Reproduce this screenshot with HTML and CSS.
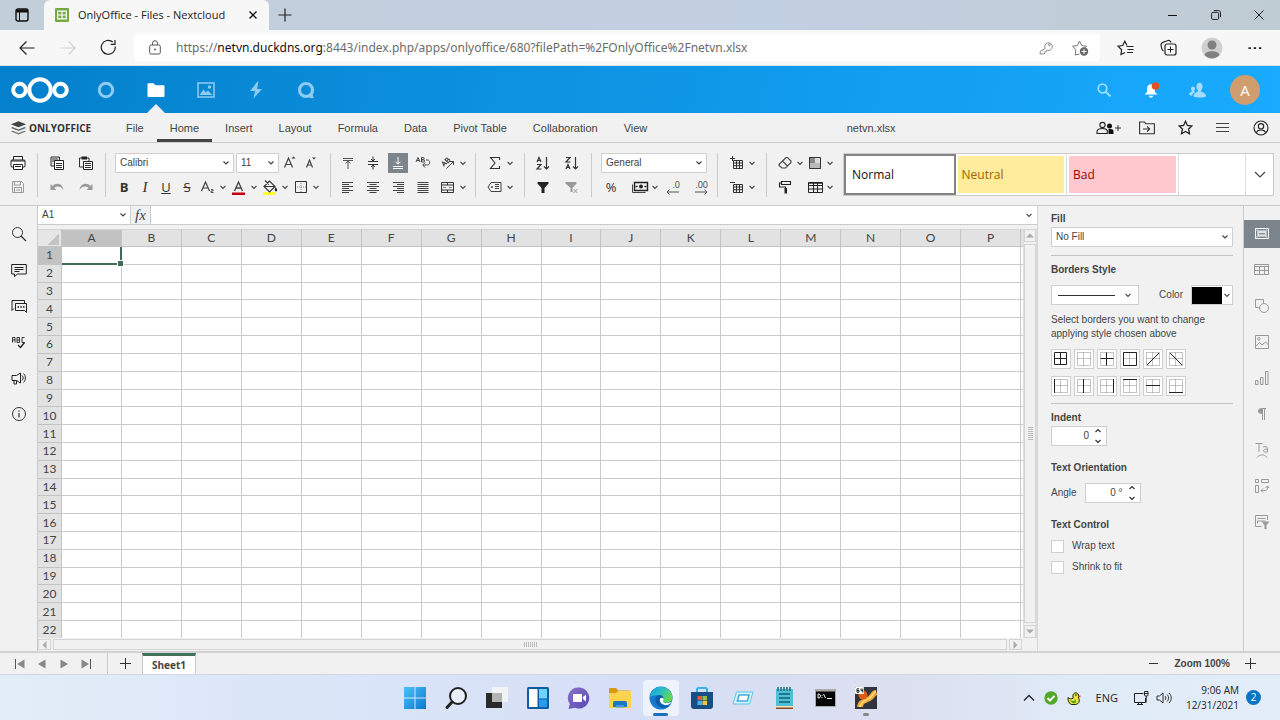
FILE: index.html
```html
<!DOCTYPE html>
<html lang="en">
<head>
<meta charset="utf-8">
<title>OnlyOffice - Files - Nextcloud</title>
<link rel="stylesheet" href="styles.css">
</head>
<body>
<svg class="sprite" aria-hidden="true">
  <symbol id="chev" viewBox="0 0 10 20"><path d="M2.500 8.800 5 11.300 7.500 8.800" fill="none" stroke="#444" stroke-width="1.200"/></symbol>
  <symbol id="dots" viewBox="0 0 14 14"><path d="M.5.5h13v13H.5zM6.500.5v13M.5 6.500h13" fill="none" stroke="#888" stroke-dasharray="1 1"/></symbol>
</svg>

<header class="browser">
  <div class="tabstrip">
    <button class="tabmenu" aria-label="Tab actions"><svg width="14" height="14" viewBox="0 0 14 14"><rect x="1" y="1" width="12" height="12" rx="2" fill="none" stroke="#111" stroke-width="1.400"/><path d="M1 3h12" stroke="#111" stroke-width="3"/><path d="M4.500 4v9" stroke="#111"/></svg></button>
    <div class="tab">
      <svg width="14" height="14" viewBox="0 0 14 14"><rect width="14" height="14" rx="1" fill="#74ab3c"/><path d="M2.700 3.200h8.600v7.600H2.700zM7 3.200v7.600M2.700 7h8.600" fill="none" stroke="#fff" stroke-width="1.200"/></svg>
      <span class="tab-title">OnlyOffice - Files - Nextcloud</span>
      <button aria-label="Close tab"><svg width="8" height="8" viewBox="0 0 8 8"><path d="M.5.5l7 7M7.500.5l-7 7" stroke="#111" stroke-width="1.300"/></svg></button>
    </div>
    <button class="newtab" aria-label="New tab"><svg width="14" height="14" viewBox="0 0 14 14"><path d="M7 .5v13M.5 7h13" stroke="#222" stroke-width="1.200"/></svg></button>
    <div class="wincontrols">
      <button aria-label="Minimize"><svg width="10" height="10" viewBox="0 0 10 10"><path d="M0 5.500h9" stroke="#111"/></svg></button>
      <button aria-label="Restore"><svg width="10" height="10" viewBox="0 0 10 10"><rect x=".6" y="2.400" width="7" height="7" rx="1.200" fill="none" stroke="#222"/><path d="M2.800.6h4.700a2 2 0 0 1 2 2v4.600" fill="none" stroke="#222"/></svg></button>
      <button aria-label="Close"><svg width="10" height="10" viewBox="0 0 10 10"><path d="M.5.5l9 9M9.500.5l-9 9" stroke="#222"/></svg></button>
    </div>
  </div>
  <div class="navbar">
    <div class="navbuttons">
      <button aria-label="Back"><svg width="16" height="16" viewBox="0 0 16 16"><path d="M15.500 8H1M7.500 1.500 1 8l6.500 6.500" fill="none" stroke="#222" stroke-width="1.200"/></svg></button>
      <button aria-label="Forward"><svg width="16" height="16" viewBox="0 0 16 16"><path d="M.5 8H15M8.500 1.500 15 8l-6.500 6.500" fill="none" stroke="#d2d2d2" stroke-width="1.200"/></svg></button>
      <button aria-label="Refresh"><svg width="17" height="17" viewBox="0 0 17 17"><path d="M15.200 7.500A7 7 0 1 1 12.800 3M15 1v4.300h-4.300" fill="none" stroke="#222" stroke-width="1.200"/></svg></button>
    </div>
    <div class="address">
      <svg width="12" height="15" viewBox="0 0 12 15"><rect x=".7" y="5" width="10.600" height="9" rx="1.500" fill="none" stroke="#555"/><path d="M3.500 5V3.200a2.500 2.500 0 0 1 5 0V5" fill="none" stroke="#555"/><circle cx="6" cy="9.500" r=".9" fill="#555"/></svg>
      <div class="url" role="textbox" aria-label="Address">https://<b>netvn.duckdns.org</b>:8443/index.php/apps/onlyoffice/680?filePath=%2FOnlyOffice%2Fnetvn.xlsx</div>
      <button aria-label="Passwords"><svg width="14" height="14" viewBox="0 0 14 14"><path d="M6.200 7.500a3.800 3.800 0 1 1 2 1.700L7.200 9.800v1H5.800v1.200l-1 1H1.200v-2.500z" fill="none" stroke="#888"/><circle cx="10.300" cy="3.800" r="1" fill="none" stroke="#888" stroke-width=".8"/></svg></button>
      <button aria-label="Add favorite"><svg width="17" height="16" viewBox="0 0 17 16"><path d="M7.500 14 3.200 15l.7-5.200L.6 6.300l4.800-.8L7.500 1l2.200 4.500 4.800.8-2 2" fill="none" stroke="#777"/><circle cx="12" cy="11.500" r="4.200" fill="#666"/><path d="M12 9v5M9.500 11.500h5" stroke="#fff"/></svg></button>
    </div>
    <div class="browser-actions">
      <button aria-label="Favorites"><svg width="17" height="16" viewBox="0 0 17 16"><path d="M8 12.500 4 14.500l.6-4.800L1 6.200l4.700-.7L7.800 1.200 10 5.500" fill="none" stroke="#222" stroke-width="1.200"/><path d="M9.500 6.500h7M10.500 9.500h6M10 12.500h6" stroke="#222"/></svg></button>
      <button aria-label="Collections"><svg width="17" height="17" viewBox="0 0 17 17"><path d="M3.500 12C1.500 11 1.500 9 1 5.500 1 4 2 3.500 8 1.500c2-.6 2.500.5 3 2" fill="none" stroke="#222" stroke-width="1.200"/><rect x="5" y="5" width="11" height="11" rx="2" fill="none" stroke="#222" stroke-width="1.200"/><path d="M10.500 7.500v6M7.500 10.500h6" stroke="#222"/></svg></button>
      <button aria-label="Profile"><svg width="22" height="22" viewBox="0 0 22 22"><circle cx="11" cy="11" r="10.500" fill="#d0d0d0"/><circle cx="11" cy="8" r="4.500" fill="#808080"/><path d="M3.500 18c1-5 14-5 15 0-4 4.500-11 4.500-15 0z" fill="#808080"/></svg></button>
      <button aria-label="Settings and more"><svg width="14" height="4" viewBox="0 0 14 4"><path d="M.5 1.200h2.400v1.900H.5zM5.700 1.200h2.400v1.900H5.700zM10.900 1.200h2.400v1.900h-2.400z" fill="#222"/></svg></button>
    </div>
  </div>
</header>

<header class="cloud">
  <a class="cloud-logo" href="#" aria-label="Nextcloud"><svg width="58" height="28" viewBox="0 0 58 28"><g fill="none" stroke="#fff"><circle cx="29" cy="14" r="10.700" stroke-width="4"/><circle cx="8.500" cy="14" r="6.300" stroke-width="4"/><circle cx="49.500" cy="14" r="6.300" stroke-width="4"/></g></svg></a>
  <nav class="cloud-apps">
    <a href="#" aria-label="Dashboard"><svg width="18" height="18" viewBox="0 0 18 18"><circle cx="9" cy="9" r="6.700" fill="none" stroke="#8ecbf1" stroke-width="3"/></svg></a>
    <a href="#" aria-label="Files" class="current"><svg width="18" height="18" viewBox="0 0 18 18"><path d="M.5 3.200a1 1 0 0 1 1-1h5l2 2h8a1 1 0 0 1 1 1V15a1 1 0 0 1-1 1h-15a1 1 0 0 1-1-1z" fill="#fff"/></svg></a>
    <a href="#" aria-label="Photos"><svg width="18" height="18" viewBox="0 0 18 18"><path d="M1 2h16v14H1z" fill="none" stroke="#8ecbf1" stroke-width="1.500"/><path d="m2.500 14 4-5.500 2.500 3 2-2 4.500 4.500z" fill="#8ecbf1"/><circle cx="12.500" cy="6" r="1.700" fill="#8ecbf1"/></svg></a>
    <a href="#" aria-label="Activity"><svg width="18" height="18" viewBox="0 0 18 18"><path d="M10.500.5 3 10h5L6.500 17.500 15 8h-5L11.500.5z" fill="#8ecbf1"/></svg></a>
    <a href="#" aria-label="Talk"><svg width="18" height="18" viewBox="0 0 18 18"><circle cx="9" cy="9" r="6.500" fill="none" stroke="#8ecbf1" stroke-width="3.200"/><path d="M12 16.500c2 .8 4 .8 5 .5-1-1-1.200-2.500-1-4z" fill="#8ecbf1"/></svg></a>
  </nav>
  <div class="cloud-right">
    <button aria-label="Search"><svg width="16" height="16" viewBox="0 0 16 16"><circle cx="6.500" cy="6.500" r="4.300" fill="none" stroke="#9edcff" stroke-width="1.800"/><path d="m9.700 9.700 4.800 4.800" stroke="#9edcff" stroke-width="2"/></svg></button>
    <button aria-label="Notifications"><svg width="18" height="18" viewBox="0 0 18 18"><path d="M2.500 13.500 5 11V7.500C5 4.500 7 3.300 9 3.300s4 1.200 4 4.200V11l2.500 2.500zM6.800 14.800h4.400c-.4 2.500-4 2.500-4.400 0z" fill="#fff"/><circle cx="13.500" cy="5" r="3.800" fill="#e9501e"/></svg></button>
    <button aria-label="Contacts"><svg width="18" height="18" viewBox="0 0 18 18"><g fill="#a3dcff"><path d="M7.500 5c0-4.500 6-4.500 6 0 0 2-.5 3.500-1.300 4.300v1.500c3 1 4.800 2 4.800 4.200 0 2-12.500 2-12.500 0 0-2 1.300-3.200 4.300-4.200V9.300C8 8.500 7.500 7 7.500 5z"/><path d="M2 7.500c0-2.800 4-2.800 4 0 0 1-.3 2-.8 2.500l1 1c-2 1-3 2-3 3.500-1.700 0-3-.2-3-.7 0-2 1-2.500 2.800-3.200-.7-1-1-2-1-3.100z"/></g></svg></button>
    <button class="avatar" aria-label="Account">A</button>
  </div>
</header>

<div class="oo-head">
  <div class="oo-brand"><svg width="15" height="14" viewBox="0 0 15 14"><path d="M7.500 6.200 0 3.200 7.500.2l7.500 3z" fill="#444"/><path d="m1.500 6 6 2.500 6-2.500L15 7l-7.500 3L0 7z" fill="#666"/><path d="m1.500 9.700 6 2.400 6-2.400 1.500.8-7.500 3-7.500-3z" fill="#777"/></svg><span>ONLYOFFICE</span></div>
  <nav class="oo-tabs">
    <button>File</button><button class="on">Home</button><button>Insert</button><button>Layout</button><button>Formula</button><button>Data</button><button>Pivot Table</button><button>Collaboration</button><button>View</button>
  </nav>
  <span class="oo-file">netvn.xlsx</span>
  <div class="oo-actions">
    <button aria-label="Share"><svg width="26" height="16" viewBox="0 0 26 16"><g fill="none" stroke="#222" stroke-width="1.100"><circle cx="6.500" cy="5" r="2.600"/><path d="M1 13.500v-2.200C1.500 9 3.500 8.500 6.500 8.500c2.500 0 4 .5 4.800 2v3z"/></g><circle cx="13.500" cy="6" r="2.500" fill="#111"/><path d="M12.500 9c4 0 5 .5 5 2.500v2.500h-5z" fill="#111"/><path d="M22 5v6M19 8h6" stroke="#333"/></svg></button>
    <button aria-label="Open file location"><svg width="16" height="14" viewBox="0 0 16 14"><path d="M.6 1h5l1 1.800h8.800v10H.6zM4 8h6.500M8 5.300 10.700 8 8 10.700" fill="none" stroke="#333" stroke-width="1.100"/></svg></button>
    <button aria-label="Favorite"><svg width="15" height="15" viewBox="0 0 15 15"><path d="m7.500 1.300 1.900 4.200 4.500.5-3.300 3.100.9 4.600-4-2.300-4 2.300.9-4.600L1.100 6l4.500-.5z" fill="none" stroke="#222" stroke-width="1.300"/></svg></button>
    <button aria-label="View settings"><svg width="14" height="12" viewBox="0 0 14 12"><path d="M0 1.500h13M0 5.500h13M0 9.500h13" stroke="#444"/></svg></button>
    <button aria-label="User"><svg width="16" height="16" viewBox="0 0 16 16"><g fill="none" stroke="#222" stroke-width="1.100"><circle cx="8" cy="8" r="7"/><circle cx="8" cy="6.300" r="2.700"/><path d="M3.500 13c.5-4 8.500-4 9 0"/></g></svg></button>
  </div>
</div>

<div class="toolbar">
  <div class="group g-print">
    <div class="row"><button class="tb" aria-label="Print"><svg width="20" height="20" viewBox="0 0 20 20"><path d="M5.500 7V3.500h9V7" fill="none" stroke="#222"/><rect x="3" y="7" width="14" height="7" rx="1" fill="#fff" stroke="#222"/><path d="M3 8h14" stroke="#222"/><path d="M5.500 11.500h9v5h-9z" fill="#fff" stroke="#222"/><path d="M7 13.500h6" stroke="#222"/></svg></button></div>
    <div class="row"><button class="tb" aria-label="Save"><svg width="20" height="20" viewBox="0 0 20 20"><path d="M4.500 4.500h9l2 2v9h-11zM6.500 4.500V8h6V4.500M6.500 15.500v-5h7v5M8 13h4" fill="none" stroke="#9a9a9a"/></svg></button></div>
  </div>
  <div class="group">
    <div class="row wide"><button class="tb" aria-label="Copy"><svg width="20" height="20" viewBox="0 0 20 20"><path d="M7 13H4V4h8.500v3" fill="#ddd" stroke="#333"/><path d="M5 6h6M5 8h3" stroke="#444"/><path d="M7.500 7.500h9v9h-9z" fill="#fff" stroke="#222"/><path d="M9 10.500h6M9 12.500h6M9 14.500h6" stroke="#333"/></svg></button><button class="tb" aria-label="Paste"><svg width="20" height="20" viewBox="0 0 20 20"><path d="M7 14H3.500V5H13v3" fill="none" stroke="#333"/><path d="M5.500 3.500h5.500v3H5.500z" fill="#222"/><path d="M7.500 8.500h9v8h-9z" fill="#fff" stroke="#222"/><path d="M9 10.500h6M9 12.500h6M9 14.500h6" stroke="#333"/></svg></button></div>
    <div class="row wide"><button class="tb" aria-label="Undo"><svg width="20" height="20" viewBox="0 0 20 20"><path d="M3.500 7v6H9.500L7.200 10.800C10 8.500 14 9 16.500 13 15.500 6 9 5 5.500 9z" fill="#999"/></svg></button><button class="tb" aria-label="Redo"><svg width="20" height="20" viewBox="0 0 20 20"><path d="M16.500 7v6H10.500l2.300-2.200C10 8.500 6 9 3.500 13 4.500 6 11 5 14.500 9z" fill="#999"/></svg></button></div>
  </div>
  <div class="group g-font">
    <div class="row"><select class="sel font" aria-label="Font"><option>Calibri</option></select><select class="sel size" aria-label="Font size"><option>11</option></select><button class="tb grow" aria-label="Increase font size"><svg width="20" height="20" viewBox="0 0 20 20"><path d="M4.500 14.500 8.500 5l4 9.500M6 11.500h5" fill="none" stroke="#444" stroke-width="1.200"/><path d="m11.500 5.500 2-2 2 2z" fill="#333"/></svg></button><button class="tb" aria-label="Decrease font size"><svg width="20" height="20" viewBox="0 0 20 20"><path d="M5.500 14.500 8.500 7l3 7.500M6.500 12h4" fill="none" stroke="#444" stroke-width="1.200"/><path d="m11 4.500 2 2 2-2z" fill="#333"/></svg></button></div>
    <div class="row tight">
      <button class="tb glyph bold">B</button><button class="tb glyph ital">I</button><button class="tb glyph under">U</button><button class="tb glyph strike">S</button>
      <button class="tb drop" aria-label="Subscript"><svg width="20" height="20" viewBox="0 0 20 20"><path d="M3.500 14 7.500 5l4 9M5 11h5" fill="none" stroke="#444" stroke-width="1.200"/><path d="M13 12.500h2v1.500h-2v1.500h2.500" fill="none" stroke="#444" stroke-width=".9"/></svg><svg width="10" height="20"><use href="#chev"/></svg></button>
      <button class="tb drop" aria-label="Font color"><svg width="20" height="20" viewBox="0 0 20 20"><path d="M5.500 14 9.500 5l4 9M7 11h5" fill="none" stroke="#444" stroke-width="1.300"/><path d="M3 15.500h13v2.500H3z" fill="#c00010"/></svg><svg width="10" height="20"><use href="#chev"/></svg></button>
      <button class="tb drop" aria-label="Fill color"><svg width="20" height="20" viewBox="0 0 20 20"><path d="M3 15h13v3H3z" fill="#ffff2e"/><path d="m4 9.500 5.500-5.500 5.500 5.500-5.500 5.500zM4 9.500h11M5 3.500l4 4" fill="none" stroke="#333" stroke-width="1.100"/><path d="M15.500 10c1.500 2 2 2.500 1.500 4-1 1-2.500 0-2.200-1.200z" fill="#222"/></svg><svg width="10" height="20"><use href="#chev"/></svg></button>
      <button class="tb drop" aria-label="Borders"><svg width="20" height="20" viewBox="0 0 20 20"><path d="M4.500 4.500h11v11h-11z" fill="none" stroke="#333"/><path d="M10 6v9M6 10h9" stroke="#888" stroke-dasharray="1 1"/></svg><svg width="10" height="20"><use href="#chev"/></svg></button>
    </div>
  </div>
  <div class="group g-align">
    <div class="row"><button class="tb" aria-label="Align top"><svg width="20" height="20" viewBox="0 0 20 20"><path d="M5 5.500h10M5 7.500h10M10 8v8M7.500 10.500 10 8l2.500 2.500" fill="none" stroke="#555"/></svg></button><button class="tb" aria-label="Align middle"><svg width="20" height="20" viewBox="0 0 20 20"><path d="M5 8.500h10M5 11.500h10M10 3.500v4M10 12.500v4M8 6 10 8l2-2M8 14l2-2 2 2" fill="none" stroke="#333"/></svg></button><button class="tb active" aria-label="Align bottom"><svg width="20" height="20" viewBox="0 0 20 20"><path d="M5 13.500h10M5 15.500h10M10 4v7M7.500 8.700 10 11.200l2.500-2.500" fill="none" stroke="#fff"/></svg></button><button class="tb" aria-label="Wrap text"><svg width="20" height="20" viewBox="0 0 20 20"><path d="m3 9 2-4.500L7 9M4 7.500h2M8.500 4.500V9h2c1.500 0 1.500-2.200 0-2.200h-2 1.800c1.200 0 1.200-2.300 0-2.300zM13 7h1.500c3 0 3 5 0 5H10M12 9.500 9.800 12l2.200 2.500" fill="none" stroke="#444"/></svg></button><button class="tb drop" aria-label="Orientation"><svg width="20" height="20" viewBox="0 0 20 20"><path transform="rotate(-45 8 9)" d="m3.500 11 2-4.500 2 4.500M4.500 9.500h2M9 6.500V11h2c1.500 0 1.500-2.200 0-2.200H9h1.800c1.200 0 1.200-2.300 0-2.300z" fill="none" stroke="#444"/><path d="m8.500 15.500 7-7M12 8.500h3.500V12" fill="none" stroke="#444"/></svg><svg width="10" height="20"><use href="#chev"/></svg></button></div>
    <div class="row"><button class="tb" aria-label="Align left"><svg width="20" height="20" viewBox="0 0 20 20"><path d="M4 5.500h11M4 7.500h7M4 9.500h11M4 11.500h7M4 13.500h11M4 15.500h7" stroke="#444"/></svg></button><button class="tb" aria-label="Align center"><svg width="20" height="20" viewBox="0 0 20 20"><path d="M4 5.500h12M6.500 7.500h7M4 9.500h12M6.500 11.500h7M4 13.500h12M6.500 15.500h7" stroke="#444"/></svg></button><button class="tb" aria-label="Align right"><svg width="20" height="20" viewBox="0 0 20 20"><path d="M5 5.500h11M9 7.500h7M5 9.500h11M9 11.500h7M5 13.500h11M9 15.500h7" stroke="#444"/></svg></button><button class="tb" aria-label="Justify"><svg width="20" height="20" viewBox="0 0 20 20"><path d="M4.500 5.500h11M4.500 7.500h11M4.500 9.500h11M4.500 11.500h11M4.500 13.500h11M4.500 15.500h11" stroke="#444"/></svg></button><button class="tb drop" aria-label="Merge"><svg width="20" height="20" viewBox="0 0 20 20"><path d="M3.500 5.500h12v10h-12zM3.500 8h12M3.500 13h12M9.500 5.500V8M9.500 13v2.500" fill="none" stroke="#333"/><path d="M5 10.500h3M11 10.500h3" stroke="#888"/></svg><svg width="10" height="20"><use href="#chev"/></svg></button></div>
  </div>
  <div class="group">
    <div class="row"><button class="tb drop" aria-label="Sum"><svg width="20" height="20" viewBox="0 0 20 20"><path d="M14.500 7V4.500h-9l4.500 5.500-4.500 5.500h9V13" fill="none" stroke="#333" stroke-width="1.100"/></svg><svg width="10" height="20"><use href="#chev"/></svg></button></div>
    <div class="row"><button class="tb drop" aria-label="Named ranges"><svg width="20" height="20" viewBox="0 0 20 20"><path d="M6 5.500h10v9H6L3 10z" fill="none" stroke="#444"/><circle cx="7" cy="10" r="1" fill="#444"/><path d="M10 7.500h4M10 9.500h4M10 11.500h4" stroke="#444"/></svg><svg width="10" height="20"><use href="#chev"/></svg></button></div>
  </div>
  <div class="group g-sort">
    <div class="row wide"><button class="tb" aria-label="Sort ascending"><svg width="20" height="20" viewBox="0 0 20 20"><path d="m4 9 2-4.500L8 9M5 7.500h2M4 11.500h4L4 16h4.500M13.500 4v12M11 13.500l2.500 2.500 2.500-2.500" fill="none" stroke="#333" stroke-width="1.200"/></svg></button><button class="tb" aria-label="Sort descending"><svg width="20" height="20" viewBox="0 0 20 20"><path d="m4 16 2-4.500L8 16M5 14.500h2M4 4.500h4L4 9h4.500M13.500 4v12M11 13.500l2.500 2.500 2.500-2.500" fill="none" stroke="#333" stroke-width="1.200"/></svg></button></div>
    <div class="row wide"><button class="tb" aria-label="Filter"><svg width="20" height="20" viewBox="0 0 20 20"><path d="M4.500 5h11v1.500L11.500 11v5h-3v-5l-4-4.500z" fill="#222"/></svg></button><button class="tb" aria-label="Clear filter"><svg width="20" height="20" viewBox="0 0 20 20"><path d="M3.500 5h11v1.500L10.500 11v4h-2v-4l-5-4.500z" fill="#999"/><path d="m11.500 12 4 4M15.500 12l-4 4" stroke="#999"/></svg></button></div>
  </div>
  <div class="group">
    <div class="row"><select class="sel format" aria-label="Number format"><option>General</option></select></div>
    <div class="row numbers"><button class="tb glyph">%</button><button class="tb drop" aria-label="Accounting style"><svg width="20" height="20" viewBox="0 0 20 20"><path d="M4.500 5.500h13v8h-13z" fill="none" stroke="#222" stroke-width="1.400"/><path d="M2.500 7.500v8h13" fill="none" stroke="#444"/><circle cx="11" cy="9.500" r="2" fill="#222"/><path d="M5.500 9.500h2M14.500 9.500h2" stroke="#222" stroke-width="1.500"/></svg><svg width="10" height="20"><use href="#chev"/></svg></button><button class="tb decimals" aria-label="Decrease decimal"><span>.0</span><svg width="14" height="6" viewBox="0 0 14 6"><path d="M1 3h12M3.500.5 1 3l2.500 2.500" fill="none" stroke="#555"/></svg></button><button class="tb decimals" aria-label="Increase decimal"><span>.00</span><svg width="14" height="6" viewBox="0 0 14 6"><path d="M1 3h12M10.500.5 13 3l-2.500 2.500" fill="none" stroke="#555"/></svg></button></div>
  </div>
  <div class="group">
    <div class="row"><button class="tb drop" aria-label="Insert cells"><svg width="20" height="20" viewBox="0 0 20 20"><path d="M6.500 7.500h9v8h-9zM6.500 10h9M6.500 12.700h9M9.500 7.500v8M12.500 7.500v8M3 5.500h5M5.500 3v5" fill="none" stroke="#333"/></svg><svg width="10" height="20"><use href="#chev"/></svg></button></div>
    <div class="row"><button class="tb drop" aria-label="Delete cells"><svg width="20" height="20" viewBox="0 0 20 20"><path d="M6.500 7.500h9v8h-9zM6.500 10h9M6.500 12.700h9M9.500 7.500v8M12.500 7.500v8M3 5.500h5" fill="none" stroke="#333"/></svg><svg width="10" height="20"><use href="#chev"/></svg></button></div>
  </div>
  <div class="group g-last">
    <div class="row"><button class="tb drop" aria-label="Clear"><svg width="20" height="20" viewBox="0 0 20 20"><path d="M4 11.500 11 4.500h1.500l3.500 3.500v1.500L10.500 15H7L4 12.500zM7.500 8l5 5" fill="none" stroke="#444" stroke-width="1.100"/></svg><svg width="10" height="20"><use href="#chev"/></svg></button><button class="tb drop" aria-label="Conditional formatting"><svg width="20" height="20" viewBox="0 0 20 20"><path d="M4 4h12v12H4z" fill="#bbb"/><path d="M4 4h6v6H4z" fill="#888"/><path d="M10 4h6v6h-6z" fill="#ddd"/><path d="M4.500 4.500h11v11h-11z" fill="none" stroke="#333"/></svg><svg width="10" height="20"><use href="#chev"/></svg></button></div>
    <div class="row"><button class="tb" aria-label="Copy style"><svg width="20" height="20" viewBox="0 0 20 20"><path d="M6.500 4.500h9v3h-9zM6.500 6h-2v4h6v2" fill="none" stroke="#222" stroke-width="1.100"/><path d="M9.500 11h2.500v5.500H9.500z" fill="#222"/></svg></button><span class="filler"></span><button class="tb drop" aria-label="Format as table"><svg width="20" height="20" viewBox="0 0 20 20"><path d="M3.500 5.500h14v10h-14zM3.500 8.500h14M3.500 12h14M8.500 5.500v10M12.500 5.500v10" fill="none" stroke="#222"/><path d="M3.500 6h14" stroke="#222" stroke-width="1.500"/></svg><svg width="10" height="20"><use href="#chev"/></svg></button></div>
  </div>
  <div class="styles">
    <button class="style chosen"><span>Normal</span></button>
    <button class="style neutral"><span>Neutral</span></button>
    <button class="style bad"><span>Bad</span></button>
    <button class="style" aria-label="Next style"></button>
    <button aria-label="More styles"><svg width="12" height="8" viewBox="0 0 12 8"><path d="m1 1 5 5 5-5" fill="none" stroke="#444" stroke-width="1.200"/></svg></button>
  </div>
</div>

<main class="editor">
  <aside class="leftbar">
    <button aria-label="Find"><svg width="16" height="16" viewBox="0 0 16 16"><circle cx="6.500" cy="6.500" r="5" fill="none" stroke="#333"/><path d="m10 10 5 5" stroke="#333" stroke-width="1.200"/></svg></button>
    <button aria-label="Comments"><svg width="16" height="16" viewBox="0 0 16 16"><path d="M.7 2.500h14.600v9.500H6.500l-3 2.500V12H.7zM3.500 5.500h9M3.500 7.500h9M3.500 9.500h5" fill="none" stroke="#222"/></svg></button>
    <button aria-label="Chat"><svg width="16" height="16" viewBox="0 0 16 16"><path d="M3 10.500 1 12.500V2.500h12.500V5" fill="none" stroke="#222"/><path d="M4.500 5.500h11v9l-2-2h-9z" fill="none" stroke="#222"/><path d="M6.500 9h1.500M9.300 9h1.500M12 9h1.500" stroke="#222" stroke-width="1.500"/></svg></button>
    <button aria-label="Spell checking"><svg width="16" height="16" viewBox="0 0 16 16"><path d="M1.500 8.500v-5H4v5M1.500 6H4M6 3.500v5h2.500v-5zM6 6h2.500M13.500 3.500H11v5h2.500" fill="none" stroke="#333"/><path d="m7 11 2.500 2.500 4-5" fill="none" stroke="#222" stroke-width="1.400"/></svg></button>
    <button aria-label="Feedback"><svg width="16" height="16" viewBox="0 0 16 16"><path d="M1 5.500h4.500L9.500 3v10l-4-2.500H1zM3 10.500v3.500h2.500v-3.500M11 5.500c1.500 1.500 1.500 3.500 0 5M12.500 3.500c2.500 2 2.500 7 0 9" fill="none" stroke="#222"/></svg></button>
    <button aria-label="About"><svg width="16" height="16" viewBox="0 0 16 16"><circle cx="8" cy="8" r="6.500" fill="none" stroke="#333"/><path d="M8 7v4.500M8 4.500v1.200" stroke="#333" stroke-width="1.200"/></svg></button>
  </aside>

  <section class="sheet">
    <div class="formula">
      <select class="sel cell" aria-label="Cell name"><option>A1</option></select>
      <button class="fx">fx</button>
      <input class="expr" aria-label="Formula">
      <button class="expand" aria-label="Expand formula bar"><svg width="10" height="20"><use href="#chev"/></svg></button>
    </div>
    <div class="gridarea">
      <div class="gridwrap">
        <table class="grid">
          <thead><tr id="letters"><th class="corner"></th></tr></thead>
          <tbody id="cells"></tbody>
        </table>
      </div>
      <div class="vscroll">
        <button aria-label="Scroll up"><svg width="8" height="5" viewBox="0 0 8 5"><path d="m0 4.500 4-4 4 4z" fill="#aaa"/></svg></button>
        <div class="thumb"><i></i></div>
        <button aria-label="Scroll down"><svg width="8" height="5" viewBox="0 0 8 5"><path d="m0 .5 4 4 4-4z" fill="#aaa"/></svg></button>
      </div>
      <div class="hscroll">
        <button aria-label="Scroll left"><svg width="5" height="8" viewBox="0 0 5 8"><path d="m4.500 0-4 4 4 4z" fill="#aaa"/></svg></button>
        <div class="thumb"><i></i></div>
        <button aria-label="Scroll right"><svg width="5" height="8" viewBox="0 0 5 8"><path d="m.5 0 4 4-4 4z" fill="#aaa"/></svg></button>
      </div>
    </div>
  </section>

  <aside class="panel">
    <section class="sec">
      <label class="head" for="fill">Fill</label>
      <select class="sel full" id="fill"><option>No Fill</option></select>
    </section>
    <section class="sec sec-borders">
      <h3 class="head">Borders Style</h3>
      <div class="line-row">
        <button class="linestyle" aria-label="Line style"><i></i><svg width="10" height="20"><use href="#chev"/></svg></button>
        <span class="clabel">Color</span>
        <button class="swatch" aria-label="Border color"><i></i><svg width="10" height="20"><use href="#chev"/></svg></button>
      </div>
      <p>Select borders you want to change applying style chosen above</p>
      <div class="borders">
        <button aria-label="All borders"><svg viewBox="0 0 14 14"><path d="M.5.5h12v12H.5zM6.500.5v12M.5 6.500h12" fill="none" stroke="#222"/></svg></button>
        <button aria-label="No borders"><svg viewBox="0 0 14 14"><use href="#dots"/></svg></button>
        <button aria-label="Inner borders"><svg viewBox="0 0 14 14"><use href="#dots"/><path d="M6.500.5v13M.5 6.500h13" stroke="#222"/></svg></button>
        <button aria-label="Outer borders"><svg viewBox="0 0 14 14"><use href="#dots"/><path d="M.5.5h13v13H.5z" fill="none" stroke="#222"/></svg></button>
        <button aria-label="Diagonal up"><svg viewBox="0 0 14 14"><use href="#dots"/><path d="M1 13 13 1" stroke="#222"/></svg></button>
        <button aria-label="Diagonal down"><svg viewBox="0 0 14 14"><use href="#dots"/><path d="m1 1 12 12" stroke="#222"/></svg></button>
        <button aria-label="Left border"><svg viewBox="0 0 14 14"><use href="#dots"/><path d="M.5 0v14" stroke="#222"/></svg></button>
        <button aria-label="Inner vertical"><svg viewBox="0 0 14 14"><use href="#dots"/><path d="M6.500 0v14" stroke="#222"/></svg></button>
        <button aria-label="Right border"><svg viewBox="0 0 14 14"><use href="#dots"/><path d="M13.500 0v14" stroke="#222"/></svg></button>
        <button aria-label="Top border"><svg viewBox="0 0 14 14"><use href="#dots"/><path d="M0 .5h14" stroke="#222"/></svg></button>
        <button aria-label="Inner horizontal"><svg viewBox="0 0 14 14"><use href="#dots"/><path d="M0 6.500h14" stroke="#222"/></svg></button>
        <button aria-label="Bottom border"><svg viewBox="0 0 14 14"><use href="#dots"/><path d="M0 13.500h14" stroke="#222"/></svg></button>
      </div>
    </section>
    <section class="sec sec-text">
      <label class="head" for="indent">Indent</label>
      <div class="spin"><input id="indent" value="0"><svg width="8" height="16" viewBox="0 0 8 16"><path d="m1.500 4 2.500-2.500L6.500 4M1.500 12 4 14.500 6.500 12" fill="none" stroke="#333" stroke-width="1.200"/></svg></div>
      <h3 class="head orient">Text Orientation</h3>
      <div class="angle"><label for="angle">Angle</label><div class="spin"><input id="angle" value="0 °"><svg width="8" height="16" viewBox="0 0 8 16"><path d="m1.500 4 2.500-2.500L6.500 4M1.500 12 4 14.500 6.500 12" fill="none" stroke="#333" stroke-width="1.200"/></svg></div></div>
      <h3 class="head control">Text Control</h3>
      <label class="check"><input type="checkbox">Wrap text</label>
      <label class="check"><input type="checkbox">Shrink to fit</label>
    </section>
  </aside>

  <aside class="rightbar">
    <button class="active" aria-label="Cell settings"><svg width="16" height="16" viewBox="0 0 16 16"><path d="M1.500 2.500h13v10h-13z" fill="none" stroke="#fff"/><path d="M1.500 4.500h13M1.500 10.500h13M3.500 2.500v10M12.500 2.500v10" stroke="#b9bec2"/><path d="M4 5h8v5H4z" fill="#dfe2e4"/><path d="M5 7h6v1.500H5z" fill="#8d959b"/></svg></button>
    <button aria-label="Table settings"><svg width="16" height="16" viewBox="0 0 16 16"><path d="M.5 2.500h14v10H.5zM.5 4.500h14M.5 8.500h14M5.500 4.500v8M10.500 4.500v8" fill="none" stroke="#999"/></svg></button>
    <button aria-label="Shape settings"><svg width="16" height="16" viewBox="0 0 16 16"><path d="M5 9.500H1.500v-8h8V5" fill="none" stroke="#999"/><circle cx="10" cy="10" r="4.500" fill="none" stroke="#999"/></svg></button>
    <button aria-label="Image settings"><svg width="16" height="16" viewBox="0 0 16 16"><path d="M1.500 1.500h13v13h-13zM2 12l3.500-3.500L8 11l3.500-3 3 3" fill="none" stroke="#999"/><circle cx="4.800" cy="4.800" r="1.200" fill="none" stroke="#999"/></svg></button>
    <button aria-label="Chart settings"><svg width="16" height="16" viewBox="0 0 16 16"><path d="M1.500 14.500v-4H4v4zM6.500 14.500v-7H9v7zM11.500 14.500v-13H14v13z" fill="none" stroke="#999"/></svg></button>
    <button aria-label="Paragraph settings"><svg width="16" height="16" viewBox="0 0 16 16"><path d="M8.500 2v12M10.500 2v12M12 2.500H7.500" fill="none" stroke="#999"/><path d="M8 2C2.500 2 2.500 8 8 8z" fill="#999"/></svg></button>
    <button aria-label="Text art settings"><svg width="16" height="16" viewBox="0 0 16 16"><path d="M1.500 1.500h7M5 1.500V10M9 5c3-1 4.500 0 4.500 1.500V10C8 11 8 6.700 13.500 7.200M3 15.500c3-3.500 7-3.500 10 0" fill="none" stroke="#999"/></svg></button>
    <button aria-label="Pivot settings"><svg width="16" height="16" viewBox="0 0 16 16"><path d="M1.500 1.500h3v3h-3zM7.500 1.500h7v3h-7zM1.500 7.500h3v7h-3zM7 12.500h4c2 0 2.500-1 2.500-4.500M9 10.500l-2 2 2 2M11.500 10l2-2 1.500 2" fill="none" stroke="#999"/></svg></button>
    <button aria-label="Slicer settings"><svg width="16" height="16" viewBox="0 0 16 16"><path d="M7.500 12.500h-6v-11h12V6M3.500 4.500h8M3.500 9.500v-2.500h8" fill="none" stroke="#999"/><path d="M7.500 7.500h8L12.500 11v4h-2v-4z" fill="#999"/></svg></button>
  </aside>
</main>

<footer class="status">
  <div class="sheetnav">
    <button aria-label="First sheet"><svg width="10" height="10" viewBox="0 0 10 10"><path d="M.5 0v10" stroke="#555"/><path d="M9.500.5v9L2 5z" fill="#888"/></svg></button>
    <button aria-label="Previous sheet"><svg width="10" height="10" viewBox="0 0 10 10"><path d="M8.500.5v9L1 5z" fill="#888"/></svg></button>
    <button aria-label="Next sheet"><svg width="10" height="10" viewBox="0 0 10 10"><path d="M1.500.5v9L9 5z" fill="#888"/></svg></button>
    <button aria-label="Last sheet"><svg width="10" height="10" viewBox="0 0 10 10"><path d="M9.500 0v10" stroke="#555"/><path d="M.5.500v9L8 5z" fill="#888"/></svg></button>
  </div>
  <button class="addsheet" aria-label="Add sheet"><svg width="11" height="11" viewBox="0 0 11 11"><path d="M5.500 0v11M0 5.500h11" stroke="#333"/></svg></button>
  <button class="sheettab">Sheet1</button>
  <div class="zoom">
    <button aria-label="Zoom out"><svg width="11" height="11" viewBox="0 0 11 11"><path d="M1 5.500h9" stroke="#333"/></svg></button>
    <span>Zoom 100%</span>
    <button aria-label="Zoom in"><svg width="11" height="11" viewBox="0 0 11 11"><path d="M5.500 0v11M0 5.500h11" stroke="#333"/></svg></button>
  </div>
</footer>

<footer class="taskbar">
  <div class="apps">
    <button aria-label="Start"><svg viewBox="0 0 24 24"><defs><linearGradient id="win" x2="1" y2="1"><stop stop-color="#4cc2f5"/><stop offset="1" stop-color="#0a78d0"/></linearGradient></defs><path d="M1 1h10.500v10.500H1zM12.500 1H23v10.500H12.500zM1 12.500h10.500V23H1zM12.500 12.500H23V23H12.500z" fill="url(#win)"/></svg></button>
    <button aria-label="Search"><svg viewBox="0 0 24 24"><circle cx="14" cy="10" r="8" fill="#e9eefb" stroke="#222" stroke-width="2"/><path d="m8 16-5 5.500" stroke="#222" stroke-width="3" stroke-linecap="round"/></svg></button>
    <button aria-label="Task view"><svg viewBox="0 0 24 24"><path d="M1 7h16v15H1z" fill="#2a2a2a"/><path d="M7 1h16v15H7z" fill="#f3f3f3" opacity=".92"/><path d="M7 7h10v9H7z" fill="#b4b4b4"/></svg></button>
    <button aria-label="Widgets"><svg viewBox="0 0 24 24"><rect x="1" y="1" width="22" height="22" rx="1.500" fill="#0e5ba6"/><path d="M3 3h8.500v18H3z" fill="#fff"/><path d="M13 3h8v9.500h-8z" fill="#6fd3fb"/><path d="M13 13.500h8V21h-8z" fill="#2a9be8"/></svg></button>
    <button aria-label="Chat"><svg viewBox="0 0 24 24"><defs><linearGradient id="cht" x2="1" y2="1"><stop stop-color="#8c72c6"/><stop offset="1" stop-color="#5548b5"/></linearGradient></defs><path d="M12 1.500a10.500 10.500 0 1 1-4 20.300L1.500 23l1.300-5A10.500 10.500 0 0 1 12 1.500z" fill="url(#cht)"/><rect x="6" y="8" width="9" height="8" rx="1" fill="#fff"/><path d="m16 11 3-2.500v7L16 13z" fill="#fff"/></svg></button>
    <button aria-label="Explorer"><svg viewBox="0 0 24 24"><path d="M1 3a1 1 0 0 1 1-1h6l2.500 2.500H21a2 2 0 0 1 2 2V21H1z" fill="#d59a12"/><path d="M1 7h7l2-2h13v17H1z" fill="#fcd34c"/><path d="M5 21v-4a2 2 0 0 1 2-2h10a2 2 0 0 1 2 2v4h-3v-2H8v2z" fill="#1976c5"/><path d="M8 19h8v2.500H8z" fill="#3c9de5"/></svg></button>
    <button class="running" aria-label="Edge"><svg viewBox="0 0 24 24"><defs><linearGradient id="edg" x2="1" y2=".5"><stop stop-color="#2298dd"/><stop offset=".5" stop-color="#27bfc9"/><stop offset="1" stop-color="#65d94c"/></linearGradient></defs><circle cx="12" cy="12" r="11.500" fill="#167ad0"/><path d="M.6 11.500A11.500 11.500 0 0 1 23.500 11c.2 4-3 5.700-6 5.700-2.500 0-4-1.200-3.200-2.500 1-1.800.5-5.200-3.800-5.200C6 9 2 10 .6 11.500z" fill="url(#edg)"/><path d="M10.500 9C6 9.500 5 15 8 18.500c3 4 9 4 12.500 1-6 1.500-10-1.500-9.500-5 .2-2 1.500-2.500 3-2.200C13.700 10.300 12.500 9 10.500 9z" fill="#105ba8"/><path d="M10.800 14c0-2 2-3 3.300-1.700.8.900.6 1.600.2 2.400-.7 1.500 1.500 2.500 4 2.300 2-.1 3.500-.8 4.300-1.500-1 2-3 3.500-5.500 3.500-3.500 0-6.300-2.500-6.300-5z" fill="#fff"/></svg></button>
    <button aria-label="Store"><svg viewBox="0 0 24 24"><path d="M7 6V3.500A1.500 1.500 0 0 1 8.500 2h7A1.500 1.500 0 0 1 17 3.500V6" fill="none" stroke="#3cb0e8" stroke-width="2"/><path d="M1 6h22v14a3 3 0 0 1-3 3H4a3 3 0 0 1-3-3z" fill="#174f82"/><path d="M7.500 10H12v4H7.500z" fill="#e5593f"/><path d="M12.500 10H17v4h-4.500z" fill="#8cc63e"/><path d="M7.500 14.700H12V19H7.500z" fill="#3cb5ea"/><path d="M12.500 14.700H17V19h-4.500z" fill="#f9c73c"/></svg></button>
    <button aria-label="Remote"><svg viewBox="0 0 24 24"><path d="M5.500 6H22l-3.500 12H2z" fill="#d6f1fa" stroke="#5cc8e8"/><path d="M8 9h10l-1.700 6H6.300z" fill="#fff" stroke="#3aaede" stroke-width="1.500"/></svg></button>
    <button aria-label="Notepad"><svg viewBox="0 0 24 24"><path d="M4 3h17v19H4z" fill="#4ebfd4"/><path d="M4 21h17v2H4z" fill="#8a4b20"/><path d="M4 20h17v1.500H4z" fill="#f8e5bf"/><path d="M6 1v4M9 1v4M12 1v4M15 1v4M18 1v4" stroke="#226b80" stroke-width="1.500"/><path d="M7 8h11M7 12h11M7 16h11" stroke="#125f73" stroke-width="1.500"/></svg></button>
    <button aria-label="Command prompt"><svg viewBox="0 0 24 24"><path d="M2 3h21v18H2z" fill="#aaa"/><path d="M3 5.500h19V20H3z" fill="#050505"/><path d="M5 8v4h1.500l1-2-1-2zM9 9v.8M9 11v1M10.500 8l2 4M14 12.500h5" fill="none" stroke="#eee"/></svg></button>
    <button class="open" aria-label="VNC viewer"><svg viewBox="0 0 24 24"><path d="M1 1h22v22H1z" fill="#30343c"/><path d="M22 4c-5 0-5 5-9 7-4 3-9 2-10 10h6c0-5 6-4 10-8 2-2 2-3 4-4z" fill="#f2a638"/><path d="M22 5c-4 1-5 6-9 8-4 1-7 4-8 8h2c1-5 5-6 9-8 3-2 3-5 6-6z" fill="#ffdc72"/><circle cx="9" cy="9" r="4.500" fill="#df5b16"/><rect x="1" y="1" width="9" height="7" rx="1" fill="#fff"/><path d="M5 2.800H3v3.500h2V4.500H3M7 2.500v2.200h2M8.800 2.500v4" fill="none" stroke="#222"/></svg></button>
  </div>
  <div class="tray">
    <button aria-label="Hidden icons"><svg width="12" height="8" viewBox="0 0 12 8"><path d="m1 6.500 5-5 5 5" fill="none" stroke="#222" stroke-width="1.300"/></svg></button>
    <svg width="14" height="14" viewBox="0 0 14 14"><circle cx="7" cy="7" r="6.700" fill="#54a829"/><path d="m3.500 7 2.500 2.600L10.500 4.800" fill="none" stroke="#fff" stroke-width="1.900"/></svg>
    <svg width="14" height="14" viewBox="0 0 14 14"><path d="M1 6.500c2 2 3 1 5 1V5C6 1 11 1 11.500 4v3c1.500 2 1 6-3 6.500H4.500C2 13 .5 9 1 6.500z" fill="#e9e53c" stroke="#1a2410"/><path d="M3 9c3 2 5 1 6-1v3.500c-2 1.500-5 .5-6-2.500z" fill="#4fa32a"/><path d="M11 4.500h2.500v1.700H11z" fill="#d04a16"/><circle cx="9" cy="4" r=".8" fill="#111"/></svg>
    <span class="lang">ENG</span>
    <svg class="t-net" width="16" height="16" viewBox="0 0 16 16"><path d="M10.500 3.500h-9v9h11V8M4 14.500h6M5.500 12v2.500M8.500 12v2.500" fill="none" stroke="#222"/><path d="M11.500 1.500h3.500V5a1 1 0 0 1-1 1h-1.500a1 1 0 0 1-1-1zM13.200 6v6.500M11.500 3.500H15" fill="none" stroke="#222"/></svg>
    <svg width="16" height="14" viewBox="0 0 16 14"><path d="M1 5h2.500L7 2v10L3.500 9H1zM9 5c1 1 1 3 0 4M11 3.500c2 2 2 5 0 7M13 2c3 3 3 7 0 10" fill="none" stroke="#333"/></svg>
    <div class="clock"><time>9:06 AM</time><time>12/31/2021</time></div>
    <span class="badge">2</span>
  </div>
</footer>
<script src="grid.js"></script>
</body>
</html>
```

FILE: styles.css
```css
*, *::before, *::after { box-sizing: border-box; }
:root {
  --ui: "Liberation Sans", Arial, sans-serif;
  --system: "Open Sans", "Noto Sans", sans-serif;
  --cells: Lato, "Open Sans", sans-serif;
  --bg: #f1f1f1;
  --line: #cbcbcb;
  --ink: #444;
}
body {
  margin: 0;
  height: 100vh;
  display: flex;
  flex-direction: column;
  overflow: hidden;
  background: var(--bg);
  color: var(--ink);
  font: 10px/14px var(--ui);
}
button, input, select { font: inherit; color: inherit; margin: 0; padding: 0; }
button { border: 0; background: none; display: flex; align-items: center; justify-content: center; }
svg { display: block; flex: none; }
h3, p { margin: 0; }
.sprite { position: absolute; width: 0; height: 0; }

/* Browser frame */
.browser { font-family: var(--system); }
.tabstrip { display: flex; height: 30px; background: linear-gradient(90deg, #c2ced8, #c1cfe2 60%, #c0ccd3); }
.tabmenu { width: 44px; }
.tab { width: 225px; display: flex; align-items: center; gap: 9px; padding: 0 12px 0 11px; background: #f7f7f7; border-radius: 6px 6px 0 0; color: #222; font-size: 11px; }
.tab-title { flex: 1; white-space: nowrap; }
.newtab { width: 32px; }
.wincontrols { margin-left: auto; display: flex; }
.wincontrols button { width: 43px; }
.navbar { display: flex; height: 36px; background: #f7f7f7; border-bottom: 1px solid #d5e5ef; }
.navbuttons { display: flex; padding-left: 6px; }
.navbuttons button { width: 41px; }
.address { flex: 1; display: flex; align-items: center; margin: 4px 0 4px 5px; padding: 0 10px 0 15px; background: #fff; border-radius: 4px; }
.url { flex: 1; margin-left: 15px; font: 12px/18px "Noto Sans", sans-serif; color: #6b6b6b; white-space: nowrap; }
.url b { font-weight: 400; color: #111; }
.address button { width: 20px; margin-left: 14px; }
.browser-actions { display: flex; padding: 0 4px; }
.browser-actions button { width: 43px; }

/* Cloud header */
.cloud { height: 47px; display: flex; align-items: center; padding: 0 20px 0 11px; background: linear-gradient(100deg, #0480cb, #19abff); }
.cloud-apps { display: flex; align-self: stretch; margin-left: 12px; }
.cloud-apps a { position: relative; width: 50px; display: flex; align-items: center; justify-content: center; }
.cloud-apps .current::after { content: ""; position: absolute; bottom: 0; border: 9px solid transparent; border-top: 0; border-bottom-color: var(--bg); }
.cloud-right { margin-left: auto; display: flex; align-items: center; gap: 17px; }
.cloud-right button { width: 30px; height: 30px; }
.cloud-right .avatar { border-radius: 50%; background: #d09e6e; color: #fff; font: 15px/30px var(--system); }

/* Editor header */
.oo-head { height: 30px; display: flex; align-items: stretch; border-bottom: 1px solid var(--line); font-size: 11px; }
.oo-brand { width: 113px; display: flex; align-items: center; gap: 3px; padding-left: 11px; font: 700 10px/14px var(--system); color: #333; }
.oo-tabs { display: flex; }
.oo-tabs button { padding: 0 13px; border: solid transparent; border-width: 3px 0; }
.oo-tabs .on { border-bottom-color: #444; }
.oo-file { flex: 1; padding: 8px 8px 0 0; text-align: center; }
.oo-actions { display: flex; }
.oo-actions button { width: 38px; }

/* Ribbon */
.toolbar { display: flex; align-items: flex-start; padding: 10px 6px 8px 0; border-bottom: 1px solid var(--line); }
.group { display: flex; flex-direction: column; gap: 4px; padding: 0 9px; border-right: 1px solid var(--line); }
.g-print, .g-font, .g-sort { padding-left: 8px; }
.g-align { padding: 0 7px; }
.g-last { padding: 0 8px; border: 0; }
.row { display: flex; height: 20px; }
.row.wide { gap: 9px; }
.row.tight { gap: 1px; }
.g-align .row { gap: 5px; }
.numbers { display: grid; grid-template-columns: 29px 30px 28px 20px; }
.tb { width: 20px; height: 20px; }
.tb.drop { width: 30px; }
.tb.active { background: #7d858c; }
.filler { width: 10px; }
.glyph { font: 13px/20px var(--system); color: #333; }
.bold { font-weight: 700; }
.ital { font-family: "Liberation Serif", serif; font-style: italic; font-size: 15px; }
.under { text-decoration: underline; }
.strike { text-decoration: line-through; }
.decimals { flex-direction: column; align-items: flex-end; font: 9px/9px var(--system); }
.sel { appearance: none; height: 20px; padding: 0 4px; border: 1px solid #cfcfcf; border-radius: 1px; background: #fff url("data:image/svg+xml,%3Csvg xmlns='http://www.w3.org/2000/svg' width='8' height='6'%3E%3Cpath d='M1.500 1.500 4 4 6.500 1.500' fill='none' stroke='%23444' stroke-width='1.200'/%3E%3C/svg%3E") no-repeat right 3px center; }
.font { width: 119px; margin: 0 2px 0 1px; }
.size { width: 43px; }
.grow { margin: 0 1px; }
.format { width: 106px; }
.styles { flex: 1; display: grid; grid-template-columns: 111fr 111fr 111fr 67fr 27px; height: 43px; background: #fff; border: 1px solid var(--line); font: 12px/18px var(--system); }
.style { padding: 2px; border-right: 1px solid #ddd; }
.style span { flex: 1; align-self: stretch; display: flex; align-items: center; padding-left: 4px; color: #111; }
.style.chosen { border: 2px solid #848484; }
.style.neutral span { background: #ffeb9c; color: #9c6500; }
.style.bad span { background: #ffc7ce; color: #9c0006; }

/* Editor body */
.editor { flex: 1; min-height: 0; display: flex; }
.leftbar { width: 37px; display: flex; flex-direction: column; align-items: center; padding-top: 10px; }
.leftbar button { width: 36px; height: 36px; }
.sheet { flex: 1; min-width: 0; display: flex; flex-direction: column; border-left: 1px solid var(--line); }
.formula { display: flex; height: 19px; background: #fff; border-bottom: 1px solid var(--line); }
.sel.cell { width: 93px; height: 18px; border-width: 0 1px 0 0; }
.fx { width: 20px; background: var(--bg); border-right: 1px solid var(--line); font: italic 15px/18px "Liberation Serif", serif; }
.expr { flex: 1; min-width: 0; border: 0; outline: 0; }
.expand { width: 16px; }
.gridarea { flex: 1; min-height: 0; margin-top: 4px; display: grid; grid-template: minmax(0, 1fr) 13px / minmax(0, 1fr) 14px; }
.gridwrap { min-height: 0; overflow: hidden; background: #fff; }
.grid { width: 100%; height: calc(100% + 1px); table-layout: fixed; border-collapse: separate; border-spacing: 0; font: 12px/14px var(--cells); }
.grid th, .grid td { padding: 0; border-right: 1px solid var(--line); border-bottom: 1px solid var(--line); }
.grid th { background: #e2e2e2; font-weight: 400; border-color: #c3c3c3; text-align: center; }
.grid thead th { height: 18px; border-top: 1px solid #d5d5d5; }
.grid .corner { width: 24px; background: linear-gradient(135deg, transparent 50%, #c4c4c4 50%) 10px 4px / 11px 11px no-repeat #e6e6e6; }
.grid .tail { width: 2px; border-right: 0; }
.grid .hot { background: #c2c2c2; }
.grid .selected { position: relative; border-right: 2px solid #3f6d55; border-bottom: 2px solid #3f6d55; }
.grid .selected::after { content: ""; position: absolute; right: -3px; bottom: -3px; width: 5px; height: 5px; background: #3f6d55; outline: 1px solid #fff; }
.vscroll { display: flex; flex-direction: column; border-left: 1px solid #ddd; border-right: 1px solid #ddd; }
.vscroll button { height: 13px; border: 1px solid #d4d4d4; }
.thumb { flex: 1; display: flex; align-items: center; justify-content: center; border: 1px solid #d4d4d4; }
.vscroll .thumb { margin: 2px 0; }
.vscroll i { width: 5px; height: 13px; background: repeating-linear-gradient(#bbb 0 1px, transparent 1px 2px); }
.hscroll { display: flex; padding: 1px 1px 1px 0; }
.hscroll button { width: 13px; border: 1px solid #d4d4d4; }
.hscroll .thumb { margin: 0 2px; }
.hscroll i { width: 13px; height: 5px; background: repeating-linear-gradient(90deg, #bbb 0 1px, transparent 1px 2px); }

/* Settings panel */
.panel { width: 207px; padding: 6px 10px 0 13px; border-left: 1px solid #d5d5d5; border-right: 1px solid var(--line); }
.head { display: block; font: 700 10px/14px var(--ui); }
.sec { padding-bottom: 8px; border-bottom: 1px solid #c4c4c4; }
.full { display: block; width: 100%; margin-top: 1px; }
.sec-borders { padding: 7px 0; }
.line-row { display: flex; align-items: center; margin: 8px 0; }
.linestyle { width: 88px; height: 20px; background: #fff; border: 1px solid #cfcfcf; }
.linestyle i { width: 57px; height: 1px; margin-right: 8px; background: #333; }
.clabel { margin-left: auto; }
.swatch { width: 42px; height: 20px; margin-left: 8px; background: #fff; border: 1px solid #cfcfcf; }
.swatch i { width: 30px; height: 17px; background: #000; }
.borders { display: grid; grid-template-columns: repeat(6, 20px); gap: 7px 3px; margin-top: 8px; }
.borders button { height: 20px; background: #fff; border: 1px solid #cfcfcf; }
.borders svg { width: 14px; height: 14px; }
.sec-text { border: 0; padding-top: 7px; }
.spin { display: flex; align-items: center; width: 56px; height: 20px; margin-top: 1px; padding-right: 4px; background: #fff; border: 1px solid #cfcfcf; }
.spin input { flex: 1; width: 0; margin-right: 5px; border: 0; outline: 0; background: none; text-align: right; }
.orient { margin-top: 15px; }
.angle { display: flex; align-items: center; gap: 8px; margin: 7px 0 15px; }
.check { display: flex; align-items: center; gap: 8px; height: 14px; margin-top: 7px; }
.check input { appearance: none; width: 13px; height: 13px; background: #fff; border: 1px solid #cfcfcf; }
.rightbar { width: 36px; display: flex; flex-direction: column; padding-top: 14px; gap: 8px; }
.rightbar button { height: 28px; }
.rightbar .active { background: #7d858c; }

/* Status bar */
.status { display: flex; height: 24px; border-top: 2px solid #d2d2d2; border-bottom: 1px solid #cfd6de; }
.sheetnav { display: flex; align-items: center; padding: 0 10px 0 9px; border-right: 1px solid var(--line); }
.sheetnav button { width: 22px; }
.addsheet { width: 34px; }
.sheettab { width: 54px; background: #fff; border: 1px solid var(--line); border-top: 3px solid #40735a; border-bottom: 0; font: 700 10px/14px var(--system); }
.zoom { margin-left: auto; display: flex; align-items: center; gap: 15px; padding-right: 24px; font-weight: 700; }

/* Taskbar */
.taskbar { height: 45px; display: grid; grid-template-columns: 1fr auto 1fr; align-items: center; background: linear-gradient(90deg, #e3edf7, #dce6f9 20%, #d6dff5 50%, #dcdff0 70%, #e0ebf8 85%, #e2edf8); font-family: var(--system); color: #222; }
.apps { grid-column: 2; display: flex; gap: 5px; }
.apps button { position: relative; width: 36px; height: 36px; border-radius: 4px; }
.apps svg { width: 24px; height: 24px; }
.apps .running { background: #edf2fc; }
.apps .running::after, .apps .open::after { content: ""; position: absolute; bottom: 0; width: 15px; height: 3px; border-radius: 2px; background: #1c6fbe; }
.apps .open::after { width: 6px; background: #888; }
.tray { display: flex; align-items: center; justify-content: flex-end; gap: 9px; padding-right: 19px; }
.lang { margin: 0 6px; font-size: 11px; }
.t-net { margin-right: -2px; }
.clock { display: flex; flex-direction: column; align-items: flex-end; width: 58px; margin-right: -2px; line-height: 15px; }
.badge { width: 15px; height: 15px; border-radius: 50%; background: #0874c4; color: #fff; line-height: 15px; text-align: center; }
```

FILE: grid.js
```javascript
const letters = "ABCDEFGHIJKLMNOP".split("");
const headRow = document.getElementById("letters");
const body = document.getElementById("cells");

const add = (row, tag, text, cls) => {
  const el = document.createElement(tag);
  el.textContent = text;
  if (cls) el.className = cls;
  row.appendChild(el);
};

letters.forEach((l, i) => add(headRow, "th", l, i === 0 ? "hot" : ""));
add(headRow, "th", "", "tail");

for (let n = 1; n <= 22; n++) {
  const row = document.createElement("tr");
  add(row, "th", n, n === 1 ? "hot" : "");
  letters.forEach((l, i) => add(row, "td", "", n === 1 && i === 0 ? "selected" : ""));
  add(row, "td", "", "tail");
  body.appendChild(row);
}
```
